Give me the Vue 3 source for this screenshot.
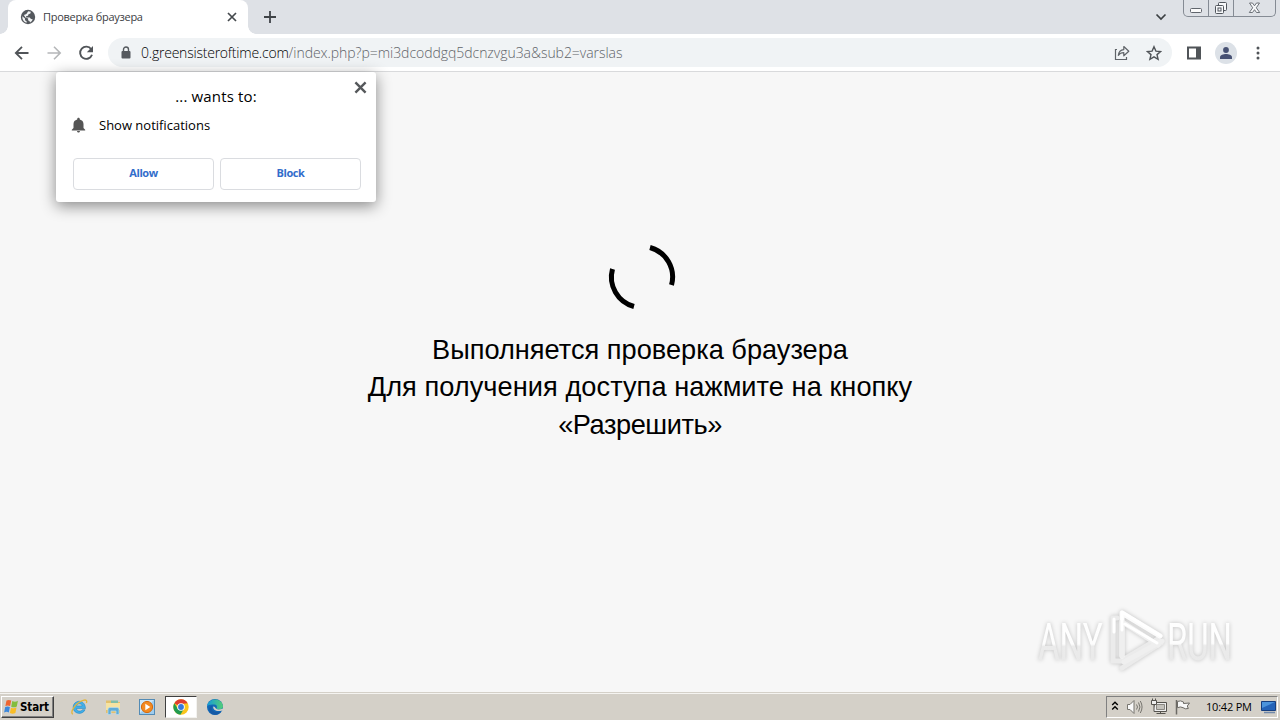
<template>
  <div class="screen">
    <header class="tabstrip">
      <div class="tab">
        <svg class="globe" viewBox="0 0 16 16" aria-hidden="true">
          <circle cx="8" cy="8" r="7.2" fill="#54585d" />
          <path d="M2.300 7.200 5 9.600v1.600l1.600 1v1.600C3.800 13.200 2.100 10.600 2.300 7.200zM8.200 2.200l2.600.6-.4 1.700-1.900.7-.5 1.500-2 .5.200 1.200h3.500l1.300 1.700 1.700.2c-.5 1.500-1.400 2.500-2.600 3.100l-.7-1.500-1.400-.6.200-1.700-2.800-1L3.900 6l2.500-1.100z" fill="#f1f3f4" />
        </svg>
        <span class="tab-title">Проверка браузера</span>
        <svg class="tab-close" viewBox="0 0 10 10" aria-hidden="true">
          <path d="M1 1l8 8M9 1L1 9" stroke="#45494d" stroke-width="1.700" />
        </svg>
      </div>
      <svg class="new-tab" viewBox="0 0 12 12" aria-hidden="true">
        <path d="M6 0v12M0 6h12" stroke="#3f4347" stroke-width="1.800" />
      </svg>
      <svg class="tab-search" viewBox="0 0 12 8" aria-hidden="true">
        <path d="M1.500 1.500 6 6l4.500-4.500" fill="none" stroke="#3c4043" stroke-width="1.700" />
      </svg>
      <div class="window-buttons">
        <span class="win-btn">
          <svg width="13" height="5" viewBox="0 0 13 5"><rect x=".5" y=".5" width="11" height="4" rx="1" fill="#fafafa" stroke="#60656c" /></svg>
        </span>
        <span class="win-btn">
          <svg width="14" height="14" viewBox="0 0 14 14" fill="#f7f8fa" stroke="#50555c">
            <rect x="4.500" y="1.500" width="8" height="8" rx="1" />
            <rect x="1.500" y="4.500" width="8" height="8" rx="1" />
            <rect x="4" y="7" width="3" height="3" />
          </svg>
        </span>
        <span class="win-btn win-btn--close">
          <svg width="13" height="12" viewBox="0 0 13 12"><path d="M1.500 1h3l2 2.800L8.500 1h3L8.300 5.800l3.400 4.700H8.500l-2-2.800-2 2.800H1.300l3.400-4.700z" fill="#f7f8fa" stroke="#60656c" stroke-width=".9" /></svg>
        </span>
      </div>
    </header>

    <nav class="toolbar">
      <svg class="nav-icon" viewBox="0 0 16 16" fill="none" stroke="#505458" stroke-width="1.800">
        <path d="M14.500 8H2M8 1.800 1.800 8 8 14.200" />
      </svg>
      <svg class="nav-icon" viewBox="0 0 16 16" fill="none" stroke="#b5b7b9" stroke-width="1.600">
        <path d="M1.500 8H14M8 1.800 14.200 8 8 14.200" />
      </svg>
      <svg class="nav-icon" viewBox="0 0 16 16">
        <path d="M13.200 4.200A6.100 6.100 0 1 0 14 9.800" fill="none" stroke="#505458" stroke-width="1.900" />
        <path d="M15 1v6.200H8.800z" fill="#505458" />
      </svg>
      <div class="omnibox">
        <svg class="lock" viewBox="0 0 10 13">
          <path d="M2.500 6V3.500a2.500 2.500 0 0 1 5 0V6" fill="none" stroke="#55595e" stroke-width="1.400" />
          <rect x=".5" y="5" width="9" height="7.500" rx="1" fill="#55595e" />
        </svg>
        <span class="url"><span class="host">0.greensisteroftime.com</span><span class="path">/index.php?p=mi3dcoddgq5dcnzvgu3a&amp;sub2=varslas</span></span>
        <svg class="share" viewBox="0 0 16 16" fill="none" stroke="#5f6368" stroke-width="1.200">
          <path d="M3 4.500H1.500v10h11v-2.500" />
          <path d="M4.300 10.300c.4-3.600 2.500-5.500 5.500-5.700V1.500l5 4.700-5 4.600V7.700c-2.400 0-4.200.8-5.500 2.600z" stroke-linejoin="round" />
        </svg>
        <svg class="star" viewBox="0 0 16 16">
          <path d="M8 1.700l1.900 4.400 4.700.4-3.600 3.100 1.100 4.700L8 11.800l-4.100 2.500L5 9.600 1.400 6.500l4.700-.4z" fill="none" stroke="#505458" stroke-width="1.400" />
        </svg>
      </div>
      <svg class="panel" viewBox="0 0 14 14">
        <path d="M0 .5h14v13H0zM2 2.500v9h7v-9z" fill="#505458" fill-rule="evenodd" />
      </svg>
      <span class="avatar">
        <svg width="12" height="12" viewBox="0 0 12 12" fill="#475173">
          <circle cx="6" cy="3" r="2.900" /><path d="M0 12v-1.800C0 8 3.500 7 6 7s6 1 6 3.200V12z" />
        </svg>
      </span>
      <svg class="menu" viewBox="0 0 4 14" fill="#505458">
        <circle cx="2" cy="2" r="1.500" /><circle cx="2" cy="7" r="1.500" /><circle cx="2" cy="12" r="1.500" />
      </svg>
    </nav>

    <main class="page">
      <svg class="spinner" viewBox="0 0 80 80" fill="none" stroke="#000" stroke-width="5">
        <path d="M48 10.500A30.500 30.500 0 0 1 69.500 48" />
        <path d="M32 69.500A30.500 30.500 0 0 1 10.500 32" />
      </svg>
      <p class="message">
        <span v-for="line in lines" :key="line.text" :class="line.cls">{{ line.text }}</span>
      </p>

      <section class="prompt">
        <svg class="prompt-close" viewBox="0 0 12 12"><path d="M1.300 1.300l9.400 9.400M10.700 1.300l-9.400 9.400" stroke="#55585b" stroke-width="2.200" /></svg>
        <h1 class="prompt-title">... wants to:</h1>
        <div class="permission">
          <svg class="bell" viewBox="0 0 14 16" fill="#555">
            <path d="M7 .8c.8 0 1.300.6 1.300 1.200v.5c2.400.6 3.700 2.200 3.700 4.500v4l1.700 1.700v.8H.3v-.8L2 11V7c0-2.300 1.300-3.900 3.700-4.500V2c0-.6.5-1.200 1.300-1.200zM5.500 14h3c0 .9-.6 1.500-1.500 1.500s-1.500-.6-1.500-1.500z" />
          </svg>
          <span>Show notifications</span>
        </div>
        <div class="prompt-actions">
          <button type="button">Allow</button>
          <button type="button">Block</button>
        </div>
      </section>

      <svg class="watermark" viewBox="0 0 210 70" aria-label="ANY RUN">
        <defs>
          <linearGradient id="wmFill" x1="0" y1="0" x2="0" y2="1">
            <stop offset="0" stop-color="#fff" />
            <stop offset=".52" stop-color="#fdfdfd" />
            <stop offset=".56" stop-color="#ebebeb" />
            <stop offset="1" stop-color="#e8e8e8" />
          </linearGradient>
        </defs>
        <g fill="url(#wmFill)">
          <text transform="translate(8 54) scale(.65 1)">ANY</text>
          <text transform="translate(137 54) scale(.645 1)">RUN</text>
        </g>
        <g fill="none" stroke-width="5" stroke-linejoin="round" stroke-linecap="round">
          <path d="M87 12h-4v43h8l37-22" stroke="#ebebeb" />
          <path d="M92 62l39-25" stroke="#ebebeb" />
          <path d="M92 50V7l38 23" stroke="#fbfbfb" />
          <path d="M92 16v34M94 56l38-21M94 17l34 22" stroke="#efefef" />
          <path d="M84 26V13M92 24V6l39 24M95 18l32 19" stroke="#fff" stroke-width="3" />
        </g>
      </svg>
    </main>

    <footer class="taskbar">
      <button type="button" class="start">
        <svg width="17" height="16" viewBox="0 0 17 16">
          <path d="M3.500 1.600C5.300.5 6.700.8 8.200 1.600L7.100 7.100c-1.800-.9-3.200-.8-4.700 0z" fill="#ef6530" />
          <path d="M9.300 2.100c1.900.8 3.600.8 5.600-.3l-1.100 5.700c-2 1.100-3.700 1.100-5.600.2z" fill="#83bd3e" />
          <path d="M2.200 8.100c1.700-.9 3.200-.8 4.700 0l-1.100 5.300c-1.700-.8-3.100-.7-4.700.1z" fill="#3d88dc" />
          <path d="M8 8.700c1.900.9 3.600.8 5.500-.2l-1.100 5.400c-1.900 1.100-3.600 1-5.500.1z" fill="#f9bd26" />
        </svg>
        <span>Start</span>
      </button>
      <div class="quick">
        <span class="task">
          <svg width="18" height="18" viewBox="0 0 18 18">
            <path d="M15.500 10.500H6.500c.2 2.800 4.400 3.600 5.900 1.200h2.700c-2.700 6-12.100 4.300-12-2.500C3.200 1.900 15 .2 15.500 10.500zM6.600 7.900h5.500c-.3-2.700-5-2.800-5.500 0z" fill="#42aee7" stroke="#1680c2" stroke-width=".5" fill-rule="evenodd" />
            <path d="M2.800 16.300C-.5 13.600 6.600 4 13.200 2.300c3.200-.9 4.100.4 3.200 2.700" fill="none" stroke="#e4b53a" stroke-width="1.300" />
          </svg>
        </span>
        <span class="task">
          <svg width="18" height="18" viewBox="0 0 18 18">
            <path d="M2 2.500h5l1 1.500h8v11H2z" fill="#e3c06c" />
            <path d="M7 2.500h7v3H7z" fill="#82bfa8" /><path d="M2 5h14v7H2z" fill="#f6e3a1" />
            <path d="M4 16.500V11q0-1.500 2-1.500h7q2 0 2 1.500v5.500h-3V13H7v3.500z" fill="#60acd7" stroke="#b9dcec" stroke-width=".7" />
          </svg>
        </span>
        <span class="task">
          <svg width="18" height="18" viewBox="0 0 18 18">
            <rect x="1.500" y="1.500" width="15" height="15" fill="#9fcced" stroke="#538bb5" />
            <path d="M2 2h14L2 15z" fill="#cde7f8" />
            <circle cx="9" cy="9" r="5.600" fill="#f48a20" stroke="#d56b0e" /><path d="M7.300 5.800v6.400l5-3.200z" fill="#fff" />
          </svg>
        </span>
        <span class="task task--active">
          <svg width="16" height="16" viewBox="0 0 16 16">
            <circle cx="8" cy="8" r="7.700" fill="#f9c51c" />
            <path d="M8 8 1.330 4.150A7.700 7.700 0 0 1 14.670 4.150L8 5z" fill="#df3d31" />
            <path d="M1.330 4.150A7.700 7.700 0 0 0 7.400 15.680L10.800 9.900 8 8 4.800 9.700z" fill="#229b50" />
            <circle cx="8" cy="8" r="3.800" fill="#fff" /><circle cx="8" cy="8" r="2.900" fill="#3578dc" />
          </svg>
        </span>
        <span class="task">
          <svg width="18" height="18" viewBox="0 0 18 18">
            <defs><linearGradient id="edgeTop"><stop stop-color="#159bd9" /><stop offset="1" stop-color="#54ce76" /></linearGradient></defs>
            <circle cx="9" cy="9" r="8" fill="#1268b7" />
            <path d="M1.200 8C2-.5 16-1.100 17 8.200c0 3.500-5 4-6.700 2.500 1.200-1.500.8-3.700-1.800-4.100C5 6 2 7 1.200 8z" fill="url(#edgeTop)" />
            <path d="M7.300 8.500c-.8 3.300 3.300 5.500 8.200 4.200l2.500-.6V9.800c-1.500 1.700-6.500 2.200-7.800.9C9.100 9.500 8.700 8.300 7.300 8.500z" fill="#d4d0c8" />
            <path d="M6.500 7.500c-3 4 1.500 8 8.500 5.900-2.500 4.500-10.300 4.600-11.600-.3C2.600 10 4 8 6.500 7.500z" fill="#1659a5" />
          </svg>
        </span>
      </div>
      <div class="tray">
        <svg width="8" height="11" viewBox="0 0 8 11" fill="none" stroke="#000" stroke-width="1.400"><path d="M1.200 4 4 1.200 6.800 4M1.200 8.500 4 5.700l2.800 2.800" /></svg>
        <svg width="18" height="16" viewBox="0 0 18 16" fill="none" stroke="#77756f">
          <path d="M2.500 5.500H5l4-4v13l-4-4H2.500z" fill="#fafafa" /><path d="M11.500 5.500q2 2.500 0 5M13.500 3.500q3 4.500 0 9M15.300 2q3.500 6 0 12" />
        </svg>
        <svg width="18" height="17" viewBox="0 0 18 17" fill="none" stroke="#55534e">
          <path d="M5.500 4.500h12v9h-12z" fill="#eee" /><path d="M7.500 6.500h8v5h-8z" fill="#c4c2bc" stroke="#8a8882" /><path d="M11.500 13.500v2M7.500 15.500h9" />
          <path d="M2.500 2.500h5v4h-5zM3.500.5v2M6.500.5v2M5 6.500v7h2" fill="#eee" />
        </svg>
        <svg width="18" height="16" viewBox="0 0 18 16" fill="#f7f7f7" stroke="#6c6a65">
          <path d="M3.500 1v14.500" stroke-width="1.500" /><path d="M4.500 2.500q3-1.500 6 .5v1.500l6-.5-2.200 3 1 2.500q-3 1-5.300-.8-2.500-1.500-5.500 0z" />
        </svg>
        <span class="clock">10:42 PM</span>
        <svg class="desktop" width="16" height="14" viewBox="0 0 16 14"><path d="M.5 1.500h14v9H.5z" fill="#2463b8" stroke="#163f80" /><path d="M1 2h13L1 8z" fill="#4c94dc" /><path d="M3 12.500h11" stroke="#7189aa" stroke-width="1.500" /></svg>
      </div>
    </footer>
  </div>
</template>

<script setup>
const lines = [
  { text: 'Выполняется проверка браузера', cls: 'line-check' },
  { text: 'Для получения доступа нажмите на кнопку', cls: 'line-press' },
  { text: '«Разрешить»', cls: 'line-allow' },
]
</script>

<style>
body { margin: 0; overflow: hidden; }
</style>

<style scoped>
.screen {
  width: 1280px; height: 720px;
  display: flex; flex-direction: column;
  background: #f7f7f7; color: #000;
  font-family: "Open Sans", "Noto Sans", sans-serif;
  overflow: hidden;
}
svg { display: block; flex: none; }
button { font: inherit; padding: 0; margin: 0; box-sizing: border-box; }

/* Вкладки */
.tabstrip {
  height: 34px; flex: none;
  display: flex; align-items: flex-start;
  background: #dee1e6; padding-left: 8px;
}
.tab {
  position: relative;
  width: 240px; height: 34px; box-sizing: border-box;
  display: flex; align-items: center;
  padding: 0 11px 0 12px;
  background: #fff; border-radius: 8px 8px 0 0;
}
.tab::before, .tab::after {
  content: ""; position: absolute; bottom: 0; width: 8px; height: 8px;
}
.tab::before { left: -8px; background: radial-gradient(circle at 0 0, transparent 7.5px, #fff 8px); }
.tab::after { right: -8px; background: radial-gradient(circle at 100% 0, transparent 7.5px, #fff 8px); }
.globe { width: 16px; height: 16px; }
.tab-title { flex: 1; margin-left: 7px; font-size: 11px; line-height: 16px; letter-spacing: -0.28px; color: #3c4043; white-space: nowrap; }
.tab-close { width: 10px; height: 10px; }
.new-tab { width: 12px; height: 12px; margin: 11px 0 0 16px; }
.tab-search { width: 12px; height: 8px; margin: 13px 16px 0 auto; }
.window-buttons {
  display: flex; width: 93px; height: 17px; box-sizing: border-box;
  margin-right: 4px;
  border: 1px solid #858b94; border-top: 0; border-radius: 0 0 5px 5px;
}
.win-btn { width: 24px; display: flex; align-items: center; justify-content: center; border-right: 1px solid #858b94; }
.win-btn:first-child { align-items: flex-end; padding-bottom: 3px; height: 13px; border-right: 0; }
.win-btn:nth-child(2) { border-left: 1px solid #858b94; }
.win-btn--close { flex: 1; border-right: 0; }

/* Панель навигации */
.toolbar {
  height: 38px; flex: none; box-sizing: border-box;
  display: flex; align-items: center;
  padding: 0 20px 0 14px;
  background: #fff; border-bottom: 1px solid #d9dadc;
}
.nav-icon { width: 16px; height: 16px; margin-right: 16px; }
.omnibox {
  width: 1064px; height: 29px; margin-left: -2px;
  box-sizing: border-box; padding: 0 10px 0 13px;
  display: flex; align-items: center;
  background: #f0f3f5; border-radius: 15px;
}
.lock { width: 10px; height: 13px; }
.url { flex: 1; margin-left: 10px; font-size: 14px; line-height: 20px; font-weight: 300; white-space: nowrap; }
.host { color: #000; letter-spacing: -0.22px; }
.path { color: #5f6368; letter-spacing: -0.04px; }
.share { width: 16px; height: 16px; margin-right: 16px; }
.star { width: 16px; height: 16px; }
.panel { width: 14px; height: 14px; margin-left: 15px; }
.avatar {
  width: 22px; height: 22px; margin-left: 14px;
  display: flex; align-items: center; justify-content: center;
  border-radius: 50%; background: #dce1e7;
}
.menu { width: 4px; height: 14px; margin-left: auto; }

/* Страница */
.page {
  position: relative; flex: 1;
  display: flex; flex-direction: column; align-items: center;
  padding-top: 165px; box-sizing: border-box;
}
.spinner { width: 80px; height: 80px; margin-left: 4px; }
.message {
  margin: 14px 0 0; display: flex; flex-direction: column; align-items: center;
  font: 27.2px/37.5px "Liberation Sans", Arial, sans-serif;
  white-space: nowrap;
}
.line-check { height: 37px; }
.line-press { height: 38px; letter-spacing: 0.05px; }
.line-allow { letter-spacing: -0.45px; }
.prompt {
  position: absolute; left: 56px; top: 0;
  width: 320px; height: 130px; box-sizing: border-box;
  padding: 14px 15px 12px 17px;
  background: #fff; border-radius: 3px;
  box-shadow: 0 4px 15px rgba(0, 0, 0, 0.45);
  display: flex; flex-direction: column;
}
.prompt-close { position: absolute; top: 9px; right: 9px; width: 13px; height: 13px; }
.prompt-title { margin: 0 2px 0 0; font-size: 15px; line-height: 20px; font-weight: 400; letter-spacing: 0.15px; text-align: center; }
.permission { display: flex; align-items: center; margin: 10px 0 0 -2px; font-size: 13px; line-height: 18px; }
.bell { width: 15px; height: 16px; margin-right: 13px; }
.prompt-actions { display: flex; gap: 6px; margin-top: 24px; }
.prompt-actions button {
  flex: 1; height: 32px; padding-bottom: 3px;
  background: #fff; border: 1px solid #dadce0; border-radius: 4px;
  color: #326dcb; font-size: 11px; font-weight: 700; letter-spacing: -0.4px;
}
.watermark {
  position: absolute; left: 1030px; top: 534px; width: 210px; height: 70px;
  overflow: visible;
  filter: drop-shadow(0 0 2px rgba(0, 0, 0, 0.22));
}
.watermark text { font: 400 51px Roboto, sans-serif; }

/* Панель задач */
.taskbar {
  height: 27px; flex: none; box-sizing: border-box;
  display: flex; align-items: center;
  padding: 1px 2px 1px 1px;
  background: #d4d0c8;
  box-shadow: 0 -1px #d4d0c8, inset 0 1px #f5f4f1;
}
.start {
  width: 53px; height: 22px;
  display: flex; align-items: center; gap: 0; padding-left: 1px;
  background: #d4d0c8; color: #000;
  border: 1px solid; border-color: #fff #404040 #404040 #fff;
  box-shadow: inset -1px -1px #808080;
  font: bold 11.5px "DejaVu Sans Condensed", "DejaVu Sans", sans-serif;
  letter-spacing: -0.1px;
}
.quick { display: flex; gap: 2px; margin-left: 9px; }
.task { width: 32px; height: 22px; display: flex; align-items: center; justify-content: center; box-sizing: border-box; }
.task--active { background: #fff; border: 1px solid; border-color: #404040 #f3f2ef #f3f2ef #404040; }
.tray {
  width: 172px; height: 22px; box-sizing: border-box; margin-left: auto;
  display: flex; align-items: center; gap: 6px; padding-left: 4px;
  border: 1px solid; border-color: #808080 #fff #fff #808080;
}
.clock { margin-left: 9px; font-size: 11px; letter-spacing: -0.2px; white-space: nowrap; }
.desktop { margin-left: auto; }
</style>
